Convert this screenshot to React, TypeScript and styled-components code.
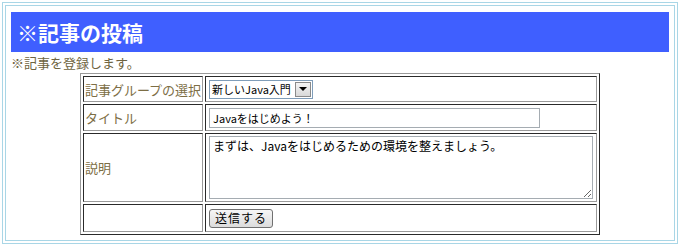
import styled, { createGlobalStyle } from 'styled-components';

const GlobalStyle = createGlobalStyle`
	body {
		margin: 0;
		background: #ffffff;
		font-family: 'Liberation Sans', 'Noto Sans CJK JP', sans-serif;
	}
`;

const Frame = styled.div`
	box-sizing: border-box;
	width: 676px;
	height: 242px;
	margin: 2px;
	border: 4px double #a9d6e6;
	padding: 6px 5px;
`;

const Header = styled.h1`
	display: flex;
	align-items: center;
	height: 40px;
	margin: 0;
	padding: 0 6px;
	background: #3f5fff;
	color: #ffffff;
	font-size: 21px;
	font-weight: bold;
	font-family: 'Noto Sans CJK JP', sans-serif;
`;

const Lead = styled.p`
	margin: 2px 0 0;
	color: #6e6440;
	font-size: 13px;
	line-height: 18px;
	font-family: 'Noto Sans CJK JP', sans-serif;
`;

const FormTable = styled.table`
	width: 520px;
	margin: 1px auto 0;
	border-collapse: separate;
	border-spacing: 2px;
	border: 1px solid;
	border-color: #9a9a9a #2a2a2a #2a2a2a #9a9a9a;
`;

const Cell = styled.td<{ $h: number }>`
	box-sizing: border-box;
	height: ${(p) => p.$h}px;
	padding: 1px 3px;
	border: 1px solid;
	border-color: #2a2a2a #9a9a9a #9a9a9a #2a2a2a;
	vertical-align: middle;
`;

const Label = styled(Cell)`
	width: 122px;
	padding: 1px 1px;
	color: #7d6e45;
	font-size: 13px;
	font-family: 'Noto Sans CJK JP', sans-serif;
	white-space: nowrap;
`;

const SelectBox = styled.div`
	display: inline-flex;
	align-items: center;
	box-sizing: border-box;
	height: 19px;
	border: 1px solid #7f9db9;
	background: #ffffff;
`;

const Select = styled.select`
	appearance: none;
	border: none;
	outline: none;
	background: transparent;
	padding: 0 4px 0 2px;
	font-size: 11px;
	font-family: 'Noto Sans CJK JP', sans-serif;
	color: #000000;
`;

const Arrow = styled.span`
	display: flex;
	align-items: center;
	justify-content: center;
	box-sizing: border-box;
	width: 16px;
	height: 15px;
	margin-right: 1px;
	border: 1px solid #8a8a8a;
	background: linear-gradient(#f4f4f4, #d8d8d8);

	&::after {
		content: '';
		border-left: 4px solid transparent;
		border-right: 4px solid transparent;
		border-top: 4px solid #000000;
	}
`;

const TextInput = styled.input`
	box-sizing: border-box;
	width: 331px;
	height: 20px;
	padding: 0 3px;
	border: 1px solid #a5acb2;
	font-size: 11px;
	font-family: 'Noto Sans CJK JP', sans-serif;
	color: #000000;
`;

const TextArea = styled.textarea`
	display: block;
	box-sizing: border-box;
	width: 384px;
	height: 63px;
	padding: 2px 3px;
	border: 1px solid #a5acb2;
	font-size: 12px;
	line-height: 14px;
	font-family: 'Noto Sans CJK JP', monospace;
	color: #000000;
`;

const SubmitButton = styled.button`
	box-sizing: border-box;
	height: 19px;
	padding: 0 5px;
	border: 1px solid #707070;
	border-radius: 3px;
	background: linear-gradient(#f6f6f6, #dcdcdc);
	font-size: 12px;
	line-height: 14px;
	letter-spacing: 1px;
	font-family: 'Noto Sans CJK JP', sans-serif;
	color: #000000;
`;

export default function App() {
	return (
		<>
			<GlobalStyle />
			<Frame>
				<Header>※記事の投稿</Header>
				<Lead>※記事を登録します。</Lead>
				<FormTable>
					<tbody>
						<tr>
							<Label $h={26}>記事グループの選択</Label>
							<Cell $h={26}>
								<SelectBox>
									<Select defaultValue="java">
										<option value="java">新しいJava入門</option>
									</Select>
									<Arrow />
								</SelectBox>
							</Cell>
						</tr>
						<tr>
							<Label $h={27}>タイトル</Label>
							<Cell $h={27}>
								<TextInput defaultValue="Javaをはじめよう！" />
							</Cell>
						</tr>
						<tr>
							<Label $h={69}>説明</Label>
							<Cell $h={69}>
								<TextArea defaultValue="まずは、Javaをはじめるための環境を整えましょう。" />
							</Cell>
						</tr>
						<tr>
							<Label $h={28} />
							<Cell $h={28}>
								<SubmitButton type="button">送信する</SubmitButton>
							</Cell>
						</tr>
					</tbody>
				</FormTable>
			</Frame>
		</>
	);
}
